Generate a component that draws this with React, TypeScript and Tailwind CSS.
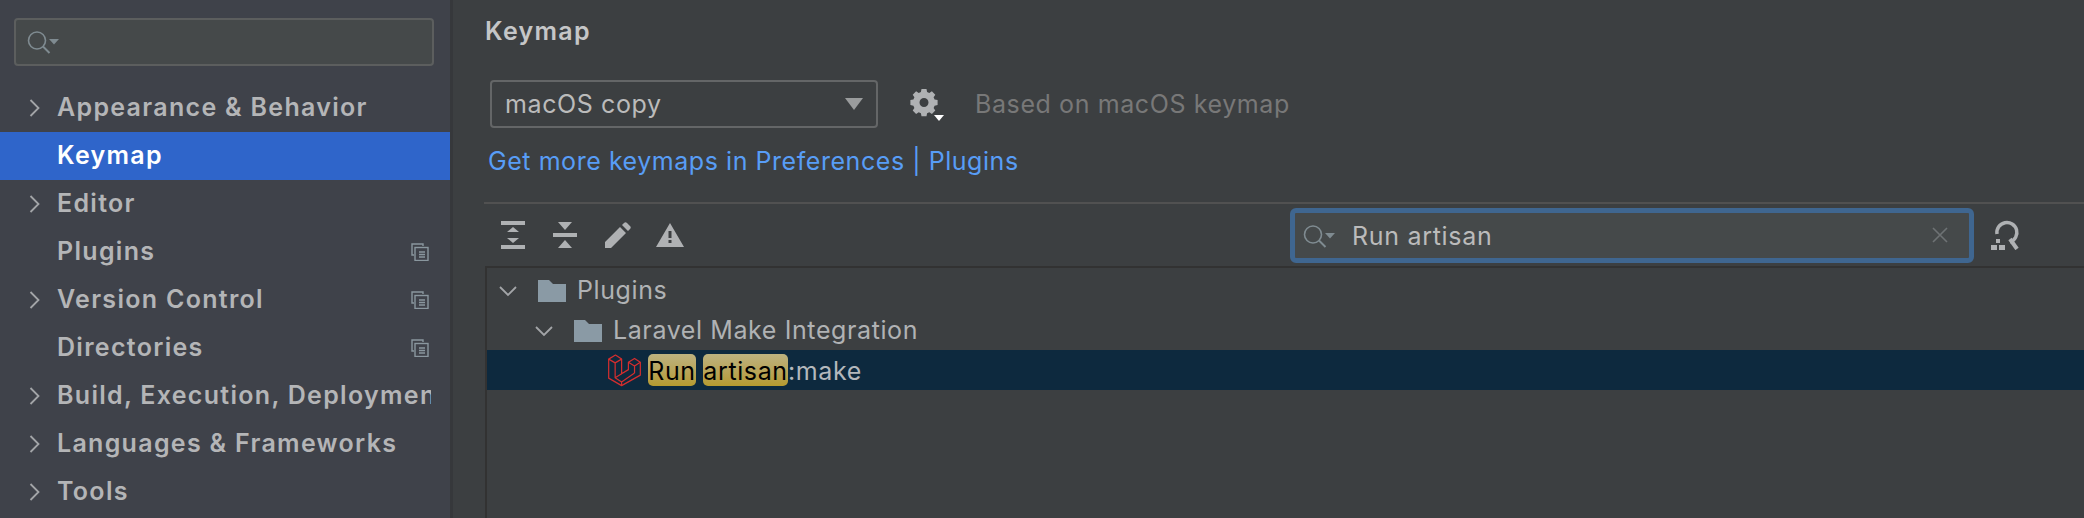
const font = { fontFamily: 'Inter, "Liberation Sans", sans-serif' }

function ChevronRight() {
  return (
    <svg width="12" height="18" viewBox="0 0 12 18" fill="none" stroke="#a3a5a8" strokeWidth="1.8">
      <path d="M1.5 1l8 8-8 8" />
    </svg>
  )
}

function ChevronDown() {
  return (
    <svg width="18" height="11" viewBox="0 0 18 11" fill="none" stroke="#a3a5a8" strokeWidth="1.8">
      <path d="M1 1l8 8 8-8" />
    </svg>
  )
}

function SearchIcon({ color = '#7f8b91' }: { color?: string }) {
  return (
    <svg width="33" height="25" viewBox="0 0 33 25" fill="none">
      <circle cx="11" cy="10.5" r="8.5" stroke={color} strokeWidth="1.6" />
      <path d="M17 16.5l6.5 6.5" stroke={color} strokeWidth="2" />
      <path d="M23 9h10l-5 5.5z" fill={color} />
    </svg>
  )
}

function ProjectIcon() {
  return (
    <svg width="18" height="18" viewBox="0 0 18 18" fill="none" stroke="#8a979f" strokeWidth="1.4">
      <path d="M12 3V1H1v11h2" />
      <rect x="4" y="4.5" width="13" height="13" />
      <path d="M8 9h6M8 11.5h6M8 14h6" />
    </svg>
  )
}

function Folder() {
  return (
    <svg width="28" height="22" viewBox="0 0 28 22" fill="#8a9aa5">
      <path d="M0 0h11l4 4h13v18H0z" />
    </svg>
  )
}

function LaravelIcon() {
  return (
    <svg width="33" height="33" viewBox="53 43 97 95" fill="none" stroke="#d42e2e" strokeWidth="3.6" strokeLinejoin="round">
      <path d="M55 57V113L93 135 148 104V66L131 55 113 66V88L93 100V57L75 45Z" />
      <path d="M55 57L74 68 93 57M74 68V112L93 124 131 98M113 66L131 77 148 66M131 77V98M93 124V135M93 100L74 112" />
    </svg>
  )
}

const menu = [
  { label: 'Appearance & Behavior', arrow: true },
  { label: 'Keymap', active: true },
  { label: 'Editor', arrow: true },
  { label: 'Plugins', copy: true },
  { label: 'Version Control', arrow: true, copy: true },
  { label: 'Directories', copy: true },
  { label: 'Build, Execution, Deployment', arrow: true, clip: true },
  { label: 'Languages & Frameworks', arrow: true },
  { label: 'Tools', arrow: true },
]

export default function App() {
  return (
    <div className="flex w-[2084px] h-[518px] overflow-hidden bg-[#3c3f41]" style={font}>
      {/* sidebar */}
      <div className="w-[453px] h-full shrink-0 bg-[#3f424a] border-r-[3px] border-[#36383b]">
        <div className="pt-[18px] pl-[14px] pr-4">
          <div className="flex items-center w-[420px] h-[48px] pl-[10px] rounded-[4px] border-[2px] border-[#5c5e5e] bg-[#45494a]">
            <SearchIcon />
          </div>
        </div>
        <div className="mt-[18px]">
          {menu.map((m) => (
            <div
              key={m.label}
              className={`flex items-center h-[48px] text-[25px] tracking-[1.3px] font-semibold leading-[32px] ${
                m.active ? 'bg-[#2f65ca] text-white' : 'text-[#b4b5b7]'
              }`}
            >
              <div className="w-[57px] pl-[29px] shrink-0 flex items-center">{m.arrow && <ChevronRight />}</div>
              <span className={`w-[374px] pb-[2px] whitespace-nowrap ${m.clip ? 'overflow-hidden' : ''}`}>{m.label}</span>
              {m.copy && <div className="-ml-[20px] shrink-0 flex"><ProjectIcon /></div>}
            </div>
          ))}
        </div>
      </div>

      {/* content */}
      <div className="flex-1 min-w-0 flex flex-col pl-[31px]">
        <div className="h-[64px] pl-[1px] pt-[15px] text-[25px] tracking-[1.3px] leading-[32px] font-semibold text-[#c5c6c7]">Keymap</div>
        <div className="mt-[16px] flex items-center h-[48px] pl-[6px]">
          <div className="w-[388px] h-[48px] flex items-center justify-between pl-[13px] pr-[13px] rounded-[4px] border-[2px] border-[#646667] bg-[#3c3f41] text-[25px] tracking-[0.6px] text-[#bbbbbb]">
            <span className="pt-[2px]">macOS copy</span>
            <svg width="18" height="12" viewBox="0 0 18 12" fill="#9a9c9d"><path d="M0 0h18L9 12z" /></svg>
          </div>
          <div className="ml-[32px] w-[65px] flex">
            <svg width="36" height="36" viewBox="0 0 36 36">
              <path
                fill="#afb1b3"
                fillRule="evenodd"
                d="M11.5 3h5l.6 3 2.2 1 2.6-1.7 3.4 3.4-1.7 2.6 1 2.2 3 .6v5l-3 .6-1 2.2 1.7 2.6-3.4 3.4-2.6-1.7-2.2 1-.6 3h-5l-.6-3-2.2-1-2.6 1.7-3.4-3.4 1.7-2.6-1-2.2-3-.6v-5l3-.6 1-2.2-1.7-2.6 3.4-3.4 2.6 1.7 2.2-1zM14 12a4.5 4.5 0 100 9 4.5 4.5 0 000-9z"
              />
              <path fill="#ffffff" d="M24 29h10l-5 6z" />
            </svg>
          </div>
          <span className="pt-[2px] text-[25px] tracking-[0.6px] text-[#787878]">Based on macOS keymap</span>
        </div>
        <div className="mt-[18px] pl-[4px] h-[30px] text-[25px] tracking-[0.55px] leading-[30px] text-[#589df6]">Get more keymaps in Preferences | Plugins</div>

        <div className="mt-[26px] h-[2px] bg-[#515151]" />

        {/* toolbar */}
        <div className="flex items-center h-[62px] pl-[17px] pr-[62px]">
          <div className="flex items-center">
            <svg width="24" height="28" viewBox="0 0 24 28" fill="#afb1b3">
              <path d="M0 0h24v4H0zM0 24h24v4H0zM12 6l6 5H6zM12 22l-6-5h12z" />
            </svg>
            <svg className="ml-[28px]" width="24" height="26" viewBox="0 0 24 26" fill="#afb1b3">
              <path d="M0 11h24v4H0zM5 0h14l-7 8zM12 18l7 8H5z" />
            </svg>
            <svg className="ml-[28px]" width="26" height="26" viewBox="0 0 26 26" fill="#afb1b3">
              <path d="M0 26v-6L15 5l6 6L6 26zM17 3l2-2c1-1 2-1 3 0l3 3c1 1 1 2 0 3l-2 2z" />
            </svg>
            <svg className="ml-[25px]" width="28" height="24" viewBox="0 0 28 24">
              <path fill="#afb1b3" fillRule="evenodd" d="M14 0l14 24H0zM12.5 8v7h3V8zM12.5 17v3h3v-3z" />
            </svg>
          </div>
          <div className="ml-auto flex items-center">
            <div className="w-[684px] h-[55px] flex items-center pl-[7px] pr-[21px] rounded-[6px] border-[5px] border-[#3f6690] bg-[#45494a] text-[25px] tracking-[0.7px] text-[#bbbbbb]">
              <div className="flex pt-[2px]"><SearchIcon /></div>
              <span className="ml-[17px] pt-[4px]">Run artisan</span>
              <svg className="ml-auto" width="16" height="16" viewBox="0 0 16 16" stroke="#6e7274" strokeWidth="1.6"><path d="M1 1l14 14M15 1L1 15" /></svg>
            </div>
            <svg className="ml-[16px]" width="32" height="30" viewBox="0 0 32 30" fill="none">
              <path d="M7 14a10 10 0 1 1 13 8" stroke="#afb1b3" strokeWidth="3.5" />
              <path d="M20 19l7 10" stroke="#afb1b3" strokeWidth="4" />
              <path fill="#afb1b3" d="M6 19h4v4H6zM1 25h6v5H1zM9 25h6v5H9z" />
            </svg>
          </div>
        </div>

        {/* tree */}
        <div className="flex-1 ml-[1px] border-t-[2px] border-l-[2px] border-[#323232]">
          <div className="flex items-center h-[40px] pt-[2px] mt-[2px] text-[25px] tracking-[0.6px] text-[#b0b2b4]">
            <div className="w-[51px] pl-[12px] flex"><ChevronDown /></div>
            <Folder />
            <span className="ml-[11px]">Plugins</span>
          </div>
          <div className="flex items-center h-[40px] pt-[2px] text-[25px] tracking-[0.6px] text-[#b0b2b4]">
            <div className="w-[87px] pl-[48px] flex"><ChevronDown /></div>
            <Folder />
            <span className="ml-[11px]">Laravel Make Integration</span>
          </div>
          <div className="flex items-center h-[40px] bg-[#0d293e] text-[25px] tracking-[0.6px] text-[#b4b8bc]">
            <div className="ml-[121px] flex"><LaravelIcon /></div>
            <span className="ml-[7px] w-[48px] h-[32px] leading-[35px] text-center rounded-[5px] bg-gradient-to-b from-[#bdb27f] to-[#b59a2e] text-black">Run</span>
            <span className="ml-[7px] w-[85px] h-[32px] leading-[35px] text-center rounded-[5px] bg-gradient-to-b from-[#bdb27f] to-[#b59a2e] text-black">artisan</span>
            <span className="pt-[3px]">:make</span>
          </div>
        </div>
      </div>
    </div>
  )
}
